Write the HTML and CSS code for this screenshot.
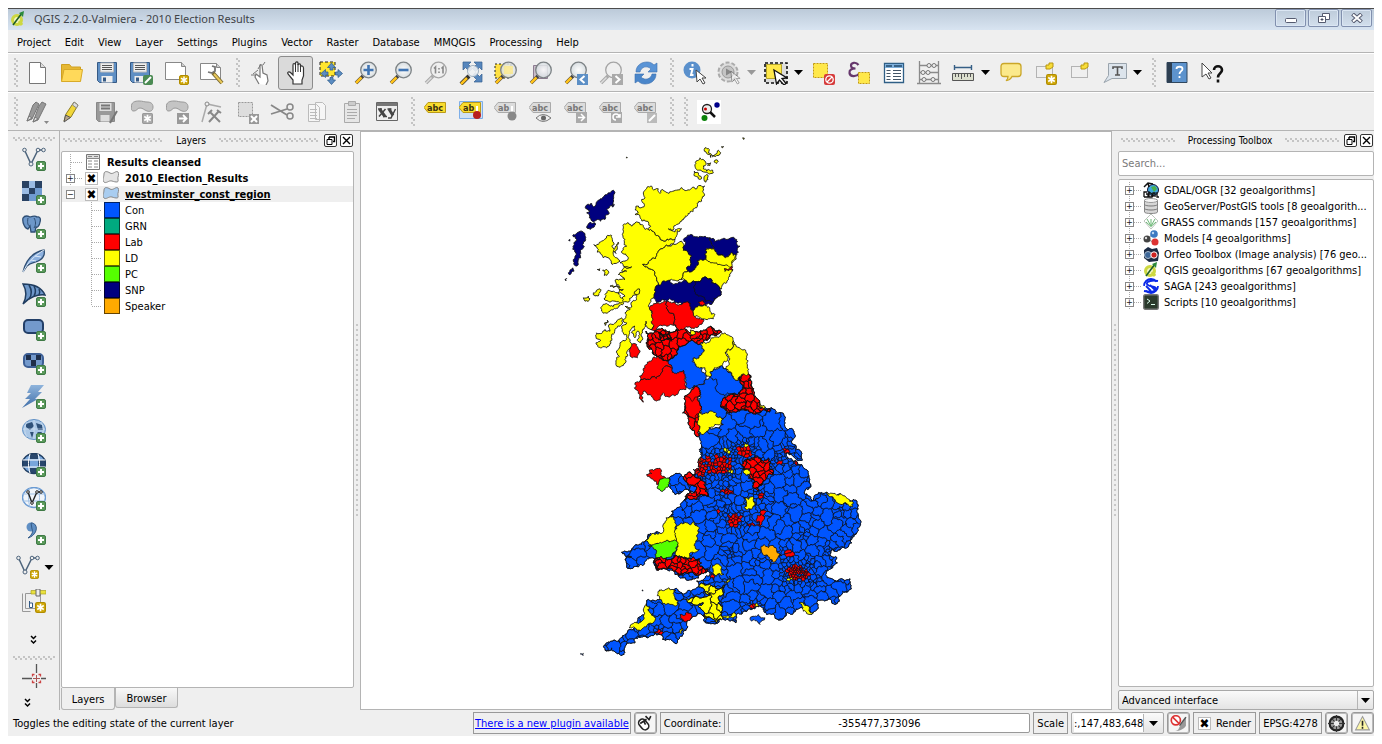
FILE: index.html
```html
<!DOCTYPE html>
<html lang="en">
<head>
<meta charset="utf-8">
<title>QGIS 2.2.0-Valmiera - 2010 Election Results</title>
<link rel="stylesheet" href="styles.css">
</head>
<body>
<svg class="sprite" aria-hidden="true">
<defs>
<linearGradient id="g-steel" x2="0" y2="1"><stop stop-color="#8fb4dc"/><stop offset="1" stop-color="#3f6ea8"/></linearGradient>
<radialGradient id="g-glass"><stop stop-color="#fff"/><stop offset="1" stop-color="#d4dbdf"/></radialGradient>
<symbol id="plus" viewBox="0 0 10 10"><rect x=".5" y=".5" width="9" height="9" rx="1.5" fill="#5b9a5b" stroke="#3f7a46"/><path d="M5 2v6M2 5h6" stroke="#fff" stroke-width="2"/></symbol>
<symbol id="star" viewBox="0 0 10 10"><rect x=".5" y=".5" width="9" height="9" rx="1.5" fill="#d0a808" stroke="#b08c00"/><path d="M5 1.5v7M2 3.2l6 3.6M8 3.2L2 6.8" stroke="#fff" stroke-width="1.5"/></symbol>
<symbol id="gstar" viewBox="0 0 10 10"><rect x=".5" y=".5" width="9" height="9" rx="1" fill="#aaa" stroke="#999"/><path d="M5 1.5v7M2 3.2l6 3.6M8 3.2L2 6.8" stroke="#fff" stroke-width="1.5"/></symbol>
<symbol id="lens" viewBox="0 0 24 24"><path d="M2 22l7-7" stroke="#444" stroke-width="3.5"/><path d="M2 22l5.5-5.5" stroke="#ffc21a" stroke-width="2.5"/><circle cx="14.5" cy="9" r="7.8" fill="url(#g-glass)" fill-opacity=".85" stroke="#7d8386" stroke-width="1.3"/></symbol>
<symbol id="glens" viewBox="0 0 24 24"><path d="M2 22l7-7" stroke="#aaa" stroke-width="3.5"/><path d="M2 22l5.5-5.5" stroke="#ddd" stroke-width="1.5"/><circle cx="14.5" cy="9" r="7.8" fill="#efefef" stroke="#a5a5a5" stroke-width="1.3"/></symbol>
<symbol id="new" viewBox="0 0 24 24"><path d="M4.5 1.5h11l5 5v16h-16z" fill="#fff" stroke="#777"/><path d="M15.5 1.5v5h5" fill="#ddd" stroke="#777"/></symbol>
<symbol id="open" viewBox="0 0 24 24"><path d="M1.5 20V3.5h8l2 2.5h9v14z" fill="#e6b834" stroke="#cfa020"/><path d="M1.5 20.5L4 8.5h18.5l-2 12z" fill="#ffd95a" stroke="#d8aa28"/></symbol>
<symbol id="save" viewBox="0 0 24 24"><path d="M2.5 1.5h19v20h-17l-2-2z" fill="#5f8fc4" stroke="#365a85"/><path d="M5.5 2h13v9h-13z" fill="#eee" stroke="#bbb"/><path d="M7 4.5h10M7 6.5h10M7 8.5h10" stroke="#555"/><path d="M6.5 15h11v6.5h-11z" fill="#eee"/><path d="M8 16.5h3v4H8z" fill="#365a85"/></symbol>
<symbol id="saveas" viewBox="0 0 24 24"><use href="#save" x="-2"/><rect x="13" y="14" width="10" height="10" rx="2" fill="#4a8a52"/><path d="M15 22l6-6" stroke="#fff" stroke-width="2"/></symbol>
<symbol id="compose" viewBox="0 0 24 24"><path d="M.5 1.5h16l4 4v13H.5z" fill="#fff" stroke="#888"/><path d="M16.5 1.5v4h4" fill="#ccc" stroke="#888"/><use href="#star" x="14" y="14" width="10" height="10"/></symbol>
<symbol id="manager" viewBox="0 0 24 24"><path d="M.5 2.5h16l4 4v12H.5z" fill="#fff" stroke="#888"/><path d="M16.5 2.5v4h4" fill="#ccc" stroke="#888"/><path d="M8 11l4 1 3-2 0-4-3-1" stroke="#777" stroke-width="1.8" fill="none"/><path d="M13 12l9 10" stroke="#7b6a32" stroke-width="4"/><path d="M14 13l8 9" stroke="#e9c95a" stroke-width="2"/></symbol>
<symbol id="touch" viewBox="0 0 24 24"><path d="M10 23l-4-7 1-3 4 3 0-12 2 0 1 8 4 2 1 6-2 4" fill="#fff" stroke="#777" stroke-width="1.2"/><path d="M4 13l5-4M2 14h4M9 8l3-5M14 4l2-3" stroke="#777" fill="none"/></symbol>
<symbol id="hand" viewBox="0 0 24 24"><path d="M9 23v-4l-5-6c-1-2 1-3 3-1l2 2V4c0-2 2-2 2.5 0V2c.5-2 2.500-1 2.500 0v2c.5-2 2.500-1 2.500 0v2c.5-2 3-1 3 1v8l-1.500 4v4z" fill="#fff" stroke="#333" stroke-width="1.2"/><path d="M11.500 4v7M14 3v8M16.500 4v7" stroke="#333"/></symbol>
<symbol id="pansel" viewBox="0 0 24 24"><path d="M1 1h15v14H1z" fill="#ffe62e" stroke="#222" stroke-dasharray="3 2"/><path d="M12.5 2l4 4.5H14V9h-3V6.500H8.500zM12.500 23.500l4-4.500H14v-2.500h-3V19H8.500zM2 12.500l4.500-4V11H9v3H6.500v2.500zM23.500 12.500l-4.500-4V11h-2.500v3H19v2.500z" fill="#5b8cc2" stroke="#33618f" stroke-width=".8"/></symbol>
<symbol id="zin" viewBox="0 0 24 24"><use href="#lens"/><path d="M14.5 4v10M9.500 9h10" stroke="#3f74b3" stroke-width="2.6"/></symbol>
<symbol id="zout" viewBox="0 0 24 24"><use href="#lens"/><path d="M9.500 9h10" stroke="#3f74b3" stroke-width="2.6"/></symbol>
<symbol id="znative" viewBox="0 0 24 24"><use href="#glens"/><path d="M10 7.500L11.500 6v6.500M17.500 7.500L19 6v6.500M15 7v1.500M15 10.500V12" stroke="#888" stroke-width="1.6" fill="none"/></symbol>
<symbol id="zfull" viewBox="0 0 24 24"><path d="M4 1h8L9.500 3.500l4 4-3 3-4-4L4 9zM23 1v8l-2.500-2.500-4 4-3-3 4-4L15 1zM23 21v-8l-2.500 2.500-4-4-3 3 4 4L15 21z" fill="#5686bd" stroke="#345f90" stroke-width=".7"/><path d="M2 23l8-8" stroke="#333" stroke-width="4"/><path d="M2 23l6-6" stroke="#ffc21a" stroke-width="2.5"/><circle cx="14" cy="10" r="5.500" fill="#eef1f3" fill-opacity=".9" stroke="#8ba0b3" stroke-width=".8"/></symbol>
<symbol id="zsel" viewBox="0 0 24 24"><path d="M1 3h16v14H1z" fill="#ffe043" stroke="#222" stroke-dasharray="2 2"/><use href="#lens"/><path d="M10 5h9v8h-9z" fill="#fbe88a" opacity=".8"/></symbol>
<symbol id="zlayer" viewBox="0 0 24 24"><path d="M4.500 4.500h14v13h-14z" fill="#c9bdca" stroke="#8c7b90"/><use href="#lens"/></symbol>
<symbol id="zlast" viewBox="0 0 24 24"><use href="#lens"/><path d="M13 13h11v11H13z" fill="#5c8fc6"/><path d="M20.500 15l-4 3.500 4 3.500" fill="none" stroke="#fff" stroke-width="2"/></symbol>
<symbol id="znext" viewBox="0 0 24 24"><use href="#glens"/><path d="M13 13h11v11H13z" fill="#aaa"/><path d="M16.500 15l4 3.500-4 3.500" fill="none" stroke="#fff" stroke-width="2"/></symbol>
<symbol id="refresh" viewBox="0 0 24 24"><path d="M2 11C2 4 8 1 13 1c3 0 5 1 7 3l3-2v9h-9l3-3c-4-4-10-2-11 3z" fill="#5a94d6" stroke="#3a6fae" stroke-width=".6"/><path d="M22 13c0 7-6 10-11 10-3 0-5-1-7-3l-3 2v-9h9l-3 3c4 4 10 2 11-3z" fill="#4a86ca" stroke="#3a6fae" stroke-width=".6"/></symbol>
<symbol id="cursor" viewBox="0 0 12 16"><path d="M1 1l10 8H7l3 5-2 1-3-5-3 3z" fill="#fff" stroke="#444"/></symbol>
<symbol id="info" viewBox="0 0 24 24"><circle cx="9" cy="9" r="8.500" fill="#5a90cc"/><path d="M9.500 3v2.500M6.500 8h3l-1.500 6h2.500" stroke="#fff" stroke-width="2" fill="none"/><use href="#cursor" x="12" y="8" width="12" height="16"/></symbol>
<symbol id="action" viewBox="0 0 24 24"><circle cx="11" cy="11" r="9.500" fill="#ddd" stroke="#aaa" stroke-width="2" stroke-dasharray="4 2"/><circle cx="11" cy="11" r="6" fill="#c4c4c4" stroke="#999"/><path d="M9 7.500l6 3.500-6 3.500z" fill="#888"/><g opacity=".5"><use href="#cursor" x="13" y="9" width="11" height="15"/></g></symbol>
<symbol id="select" viewBox="0 0 24 24"><path d="M1 2h22v20H1z" fill="#ddd" stroke="#111" stroke-width="1.6" stroke-dasharray="3 2"/><path d="M2.500 3.500h15v14h-15z" fill="#ffe84a" stroke="#b5a42a"/><path d="M10 9l13 8-5 .5 4 5-2 1.500-4.500-5-3 4z" fill="#fff" stroke="#111" stroke-width="1.3"/></symbol>
<symbol id="desel" viewBox="0 0 24 24"><path d="M1.500 2.500h14v14h-14z" fill="#ffe84a" stroke="#c29a10" stroke-dasharray="2 1"/><rect x="12" y="13" width="11" height="11" rx="2" fill="#d63a3a"/><circle cx="17.500" cy="18.500" r="3.700" fill="none" stroke="#fff" stroke-width="1.3"/><path d="M15 21l5-5" stroke="#fff" stroke-width="1.3"/></symbol>
<symbol id="expr" viewBox="0 0 24 24"><path d="M11.500 4C9 .5 4 1.500 4 4.500 4 7 7 7.500 8.500 7.500 5 7.500 2 8.500 2.500 12c.5 4 7 4 10 .5" fill="none" stroke="#66376c" stroke-width="2.2"/><path d="M11.500 11.500h11v11h-11z" fill="#ffe84a" stroke="#c29a10" stroke-dasharray="2 1"/></symbol>
<symbol id="table" viewBox="0 0 24 24"><path d="M2.500 2.500h19v19h-19z" fill="#fff" stroke="#2f5f86" stroke-width="1.3"/><path d="M3 3h18v4H3z" fill="#7fb0dc"/><path d="M4 5h6M12 5h8" stroke="#234a6b" stroke-width="1.5"/><path d="M4.500 9.500h4M4.500 12.500h4M4.500 15.500h4M4.500 18.500h4M11 9.500h8M11 12.500h8M11 15.500h8M11 18.500h8" stroke="#456"/></symbol>
<symbol id="abacus" viewBox="0 0 24 24"><path d="M2.500 0v22M21.500 0v22M0 22.500h24M2 4.500h20M2 11.500h20M2 18.500h20" stroke="#8a8a8a" stroke-width="1.3"/><g fill="#eee" stroke="#777"><circle cx="12" cy="4.500" r="2"/><circle cx="17" cy="4.500" r="2"/><circle cx="6" cy="11.500" r="2"/><circle cx="11" cy="11.500" r="2"/><circle cx="7" cy="18.500" r="2"/><circle cx="16" cy="18.500" r="2"/></g></symbol>
<symbol id="measure" viewBox="0 0 24 24"><path d="M3 6.500h18M3.500 4v5M20.500 4v5" stroke="#365f86" stroke-width="1.4"/><path d="M1.500 12.500h21v7h-21z" fill="#dcdfce" stroke="#555"/><path d="M4.500 13v3M7.500 13v3M10.500 13v5M13.500 13v3M16.500 13v3M19.500 13v3" stroke="#555"/></symbol>
<symbol id="tip" viewBox="0 0 24 24"><path d="M5 2.500h14q3 0 3 3v7q0 3-3 3h-6q-2 4-6 4 2-1 2-4H5q-3 0-3-3v-7q0-3 3-3z" fill="#fbe98b" stroke="#caa628" stroke-width="1.3"/></symbol>
<symbol id="bmshow" viewBox="0 0 24 24"><path d="M2.500 5.500h16v11h-16z" fill="none" stroke="#777" stroke-dasharray="1 1"/><path d="M12 4h3V2h4v4l-3 2h-4z" fill="#f7dc38" stroke="#b89610"/></symbol>
<symbol id="bmnew" viewBox="0 0 24 24"><use href="#bmshow"/><use href="#star" x="12" y="13" width="11" height="11"/></symbol>
<symbol id="annot" viewBox="0 0 24 24"><path d="M5.500 2.500h18v15H9l-8 4 4.500-7z" fill="#dce4ec" stroke="#9aa4ad"/><path d="M10 8V6h9v2M14.500 6v8M12 14h5" fill="none" stroke="#555" stroke-width="1.6"/></symbol>
<symbol id="help" viewBox="0 0 24 24"><path d="M2 1.500h20v20H2z" fill="#5d93cd" stroke="#30475e"/><path d="M2 1.500h5v20H2z" fill="#2d3f52"/><path d="M11.500 8c0-3 6-3 6 0 0 2-3 2.500-3 5M14.500 15v2" stroke="#fff" stroke-width="1.8" fill="none"/></symbol>
<symbol id="what" viewBox="0 0 24 24"><path d="M2 2l10 10H8l3 5-2 1-3-5-4 3z" fill="#fff" stroke="#444"/><path d="M14 9c0-5 8-5 8 0 0 3.500-4 3-4 7.500M18 18.500v3" stroke="#111" stroke-width="2.6" fill="none"/></symbol>
<symbol id="edits" viewBox="0 0 24 24"><path d="M2 21L8 5l3-3 3 2-7 15zM8 22l6-16 3-4 4 2-8 16z" fill="#999" stroke="#777"/><path d="M2 21l2-5 3 2zM8 22l2-5 3 2z" fill="#ddd" stroke="#777"/><path d="M19 21h5l-2.500 3z" fill="#888"/></symbol>
<symbol id="pencil" viewBox="0 0 24 24"><path d="M4 21l2-7L14 2l4 3-7 12z" fill="#f1d638" stroke="#8d7c22"/><path d="M14 2l4 3-1.500 3-4-3z" fill="#ddd" stroke="#888"/><path d="M4 22l1.500-7 5 2.500z" fill="#b9a68a" stroke="#555"/></symbol>
<symbol id="gsave" viewBox="0 0 24 24"><path d="M1.500 2.500h18v19h-16l-2-2z" fill="#999" stroke="#888"/><path d="M4.500 3h12v8h-12zM5.500 15h9v6.500h-9z" fill="#ddd"/><path d="M6 5.500h9M6 8.500h9M15 23l7-12" stroke="#777" stroke-width="2"/></symbol>
<symbol id="blob" viewBox="0 0 24 14"><path d="M1.500 7C1 2 5 1 9 1s5 1 8 1 6 1 6 5-3 5-6 4-4-3-7-3-3 3-6 3-2.500-2-2.500-4z" fill="#c4c4c4" stroke="#999"/></symbol>
<symbol id="feat" viewBox="0 0 24 24"><use href="#blob" width="24" height="14"/><use href="#gstar" x="12" y="13" width="11" height="11"/></symbol>
<symbol id="move" viewBox="0 0 24 24"><use href="#blob" width="24" height="14"/><path d="M12 13h12v11H12z" fill="#999"/><path d="M14 18.500h7M18 15l3.500 3.500L18 22" fill="none" stroke="#fff" stroke-width="1.8"/></symbol>
<symbol id="node" viewBox="0 0 24 24"><path d="M2 22L7 4l14 3" fill="none" stroke="#aaa" stroke-width="1.5"/><circle cx="7" cy="4" r="2" fill="#eee" stroke="#888"/><path d="M9 22l10-11M10 12l10 10M8 14l4-4M17 10l4 3" stroke="#888" stroke-width="2"/></symbol>
<symbol id="delsel" viewBox="0 0 24 24"><path d="M3.500 2.500h14v14h-14z" fill="#ddd" stroke="#999" stroke-dasharray="2 1"/><path d="M14 14h10v10H14z" fill="#999"/><path d="M16 16l6 6M22 16l-6 6" stroke="#fff" stroke-width="2"/></symbol>
<symbol id="cut" viewBox="0 0 24 24"><path d="M1 5l16 10M1 14l16-5" stroke="#888" stroke-width="1.8"/><circle cx="20" cy="7" r="3" fill="none" stroke="#888" stroke-width="1.5"/><circle cx="20" cy="16" r="3" fill="none" stroke="#888" stroke-width="1.5"/></symbol>
<symbol id="copy" viewBox="0 0 24 24"><path d="M10.500 2.500h7l3 3v14h-10zM3.500 4.500h8l3 3v14h-11z" fill="#f6f6f6" stroke="#bbb"/><path d="M5 9.500h7M5 12.500h7M5 15.500h7M5 18.500h7" stroke="#bbb"/></symbol>
<symbol id="paste" viewBox="0 0 24 24"><path d="M4.500 3.500h15v19h-15z" fill="#e6e6e6" stroke="#aaa"/><path d="M8.500 1.500h7v4h-7z" fill="#ccc" stroke="#aaa"/><path d="M7 9.500h10M7 12.500h10M7 15.500h10M7 18.500h8" stroke="#aaa"/></symbol>
<symbol id="xy" viewBox="0 0 24 24"><path d="M1.500 2.500h21v18h-21z" fill="#eee" stroke="#666"/><path d="M2 3h20v3H2z" fill="#777"/><path d="M4.500 9l5.500 7.500M14 9l4 6.500" stroke="#444" stroke-width="3" fill="none"/><path d="M10.500 9L4 16.500M3 9h4M8 16.500h4M12.500 9h4M20.500 9l-4.500 9h-3" stroke="#444" stroke-width="1.500" fill="none"/></symbol>
<symbol id="raster" viewBox="0 0 24 24"><path d="M0 0h20v20H0z" fill="#6f9bd1"/><path d="M0 0h7v7H0zM13 0h7v7h-7zM7 7h6v6H7zM0 13h7v7H0z" fill="#294263"/><path d="M7 0h6v7H7zM0 7h7v6H0z" fill="#9bbce4"/><use href="#plus" x="14" y="14" width="10" height="10"/></symbol>
<symbol id="vector" viewBox="0 0 24 24"><path d="M2.500 3L9 17 16 3h5" fill="none" stroke="#4d647c" stroke-width="1.500"/><g fill="#eee" stroke="#4d647c"><circle cx="2.500" cy="3" r="1.800"/><circle cx="9" cy="17" r="2"/><circle cx="16" cy="3" r="1.800"/><circle cx="21.500" cy="3" r="1.800"/></g></symbol>
<symbol id="vadd" viewBox="0 0 24 24"><use href="#vector"/><use href="#plus" x="14" y="14" width="10" height="10"/></symbol>
<symbol id="pg" viewBox="0 0 24 24"><path d="M1 3c2-3 5-2 7-1 3-1 6-1 7 0 3-1 4 2 3 5-.5 4-3 6-4 5l-1 5H9l-1-6-2 3C3 14 0 7 1 3z" fill="#6d97c9" stroke="#2e4e74" stroke-width="1.300"/><path d="M6 3c-1 5 0 8 2 8M12 3c2 3 2 7 0 10" stroke="#2e4e74" fill="none"/><use href="#plus" x="14" y="14" width="10" height="10"/></symbol>
<symbol id="feather" viewBox="0 0 24 24"><path d="M1 23C3 14 8 4 22 1c1 4-1 8-4 10-4 3-9 2-13 6z" fill="#8db1df" stroke="#2e4e74" stroke-width="1.300"/><path d="M1 23C6 13 12 7 22 1M9 11l5 1M13 7l6 1" stroke="#dce9f8" fill="none"/><use href="#plus" x="14" y="14" width="10" height="10"/></symbol>
<symbol id="mssql" viewBox="0 0 24 24"><path d="M1 1c9 0 18 2 22 11-7-1-16 2-22 9 4-7 4-13 0-20z" fill="#6d97c9" stroke="#203d60" stroke-width="1.500"/><path d="M7 2c3 5 3 10 0 14M12 3c2 4 2 7 0 10M17 6c1 2 1 4 0 6" stroke="#203d60" stroke-width="1.500" fill="none"/><use href="#plus" x="14" y="14" width="10" height="10"/></symbol>
<symbol id="oracle" viewBox="0 0 24 24"><rect x="2" y="3" width="19" height="13" rx="4" fill="#7399cc" stroke="#233f68" stroke-width="2"/><use href="#plus" x="14" y="14" width="10" height="10"/></symbol>
<symbol id="oraster" viewBox="0 0 24 24"><rect x="2" y="3" width="19" height="13" rx="4" fill="#7399cc" stroke="#3d5f95" stroke-width="2"/><path d="M4 4h5v5H4zM14 4h5v5h-5zM9 9h5v6H9z" fill="#1e2e49"/><use href="#plus" x="14" y="14" width="10" height="10"/></symbol>
<symbol id="bolt" viewBox="0 0 24 24"><path d="M9 0h13l-6 7h4l-7 7h3L0 23l8-9H3l6-6H5z" fill="url(#g-steel)"/><use href="#plus" x="14" y="14" width="10" height="10"/></symbol>
<symbol id="wms" viewBox="0 0 24 24"><ellipse cx="12" cy="10.500" rx="11.500" ry="10" fill="#aac7e6" stroke="#5f8fc4"/><path d="M4 5l6-2 2 4-4 4-4-3zM14 4l6 2 1 5h-5zM8 13h4l-2 6zM15 13h5l-2 3z" fill="#2f5179"/><path d="M1 10h22M12 1v19M5 3c-3 5-3 10 0 15M19 3c3 5 3 10 0 15" stroke="#d8e6f4" fill="none" stroke-width=".6"/><use href="#plus" x="14" y="14" width="10" height="10"/></symbol>
<symbol id="wcs" viewBox="0 0 24 24"><ellipse cx="12" cy="10.500" rx="11.500" ry="10" fill="#78a6db" stroke="#203d60" stroke-width="1.400"/><path d="M1 7h7v7H1zM16 7h7v7h-7zM8 1h8v5H8zM8 15h8v5H8z" fill="#203d60" opacity=".9"/><path d="M1 7h22M1 14h22M8 1c-2 6-2 13 0 19M16 1c2 6 2 13 0 19" stroke="#fff" fill="none"/><use href="#plus" x="14" y="14" width="10" height="10"/></symbol>
<symbol id="wfs" viewBox="0 0 24 24"><ellipse cx="12" cy="10.500" rx="11.500" ry="10" fill="#f1f5fa" stroke="#6a9ad2" stroke-width="1.400"/><path d="M1 7h22M1 14h22M8 1c-2 6-2 13 0 19M16 1c2 6 2 13 0 19" stroke="#9fc0e4" fill="none"/><path d="M6 5l4 11 5-11h4" stroke="#222" stroke-width="1.400" fill="none"/><g fill="#fff" stroke="#222"><circle cx="6" cy="5" r="1.300"/><circle cx="10" cy="16" r="1.300"/><circle cx="15" cy="5" r="1.300"/><circle cx="19" cy="5" r="1.300"/></g><use href="#plus" x="14" y="14" width="10" height="10"/></symbol>
<symbol id="comma" viewBox="0 0 24 24"><circle cx="9" cy="6" r="4.500" fill="#5f8fc4"/><path d="M9 2c8 0 7 12-3 15 5-4 5-7 4-9z" fill="#5f8fc4" stroke="#345a86"/><use href="#plus" x="14" y="14" width="10" height="10"/></symbol>
<symbol id="vnew" viewBox="0 0 24 24"><use href="#vector"/><use href="#star" x="14" y="15" width="9" height="9"/></symbol>
<symbol id="gps" viewBox="0 0 24 24"><path d="M.5 22.500v-18M.5 22.500h8M3.500 4.500h15v15h-15z" fill="#eee" stroke="#999"/><path d="M7.500 12v6.500h3V14h-3" fill="#fff" stroke="#345a86"/><path d="M9 1.500h15V5H9z" fill="#e9e13e" stroke="#aaa020" stroke-width=".7"/><path d="M14 0h4v7h-4z" fill="#eee" stroke="#666"/><use href="#star" x="13" y="13" width="11" height="11"/></symbol>
<symbol id="cross" viewBox="0 0 24 24"><path d="M14.500 0v9M14.500 19v5M0 14.500h10M19 14.500h5" stroke="#555" stroke-width="1.300"/><path d="M10.500 12.500v-2h2M16.500 10.500h2v2M18.500 16.500v2h-2M12.500 18.500h-2v-2" stroke="#c44" fill="none" stroke-width="1.300"/><path d="M14.500 11v7M11 14.500h7" stroke="#a55"/></symbol>
<symbol id="graph" viewBox="0 0 24 24"><path d="M0 0h24v24H0z" fill="#fff"/><circle cx="10" cy="9" r="4.500" fill="#eee" stroke="#222" stroke-width="1.300"/><path d="M13 12l5 5" stroke="#111" stroke-width="2.500"/><circle cx="8.500" cy="9" r="1.500" fill="#c00"/><circle cx="20" cy="5" r="2.700" fill="#00008b"/><circle cx="7.500" cy="18" r="3" fill="#0a820a"/></symbol>
<symbol id="down" viewBox="0 0 9 5"><path d="M0 0h9L4.500 5z" fill="currentColor"/></symbol>
<symbol id="chev" viewBox="0 0 8 10"><path d="M1 1l2.500 2.500L6 1M1 5.500L3.500 8 6 5.500" stroke="#000" stroke-width="1.500" fill="none"/></symbol>
<symbol id="tag" viewBox="0 0 24 24"><path d="M0 7.500l4-5h17.500v10H4z" fill="currentColor"/></symbol>
<symbol id="float" viewBox="0 0 13 13"><rect x=".5" y=".5" width="12" height="12" rx="1.500" fill="#fff" stroke="#333"/><path d="M5 3h5.500v4.500H9M5 3v2" fill="none" stroke="#000" stroke-width="1.400"/><path d="M3 5.500h5v5H3z" fill="none" stroke="#000"/></symbol>
<symbol id="close" viewBox="0 0 13 13"><rect x=".5" y=".5" width="12" height="12" rx="1.500" fill="#fff" stroke="#333"/><path d="M3 3l7 7M10 3l-7 7" stroke="#000" stroke-width="1.400"/></symbol>
<symbol id="poly" viewBox="0 0 16 16"><path d="M1 4c0-3 3-3 6-1s6-3 8-1-1 5 0 8-3 2-6 1-6 3-8 1 0-5 0-8z" fill="currentColor" stroke="#888"/></symbol>
<symbol id="ltable" viewBox="0 0 16 16"><path d="M1.500.5h13v15h-13z" fill="#fff" stroke="#777"/><path d="M2 1h12v3H2z" fill="#ddd"/><path d="M1 4.500h14M3 7h4M3 10h4M3 13h4M9 7h4M9 10h4M9 13h4M3 2.500h4M9 2.500h4" stroke="#888"/></symbol>
<symbol id="qgis" viewBox="0 0 16 16"><circle cx="7" cy="9" r="4.500" fill="#f3f6c0" stroke="#cdd842" stroke-width="3"/><path d="M9 10l3 4" stroke="#cdd842" stroke-width="3"/><path d="M3 14L12 2" stroke="#1d5c28" stroke-width="1.500"/><path d="M9 2l5-2-1 6z" fill="#2b8a3a"/></symbol>
<symbol id="gdal" viewBox="0 0 16 16"><circle cx="10" cy="8" r="5.500" fill="#3fa7dc" stroke="#113"/><path d="M8 5l4-1 2 3-3 3z" fill="#4cb04c"/><path d="M1 5l4-4 5 1M5 1l1 4" stroke="#111" stroke-width="1.500" fill="none"/><path d="M1 15v-5h3M3 12h2v3H1M6 15v-5l3 2v3zM10 15v-4h2v4M14 10v5h2" stroke="#111" fill="none" stroke-width="1.300"/></symbol>
<symbol id="db" viewBox="0 0 16 16"><path d="M1.500 2v12c0 2 13 2 13 0V2z" fill="#d6d6d6" stroke="#888"/><ellipse cx="8" cy="2.500" rx="6.500" ry="2" fill="#f5f5f5" stroke="#999"/><path d="M1.500 6.500c1 2 12 2 13 0M1.500 10.500c1 2 12 2 13 0" fill="none" stroke="#777"/></symbol>
<symbol id="grass" viewBox="0 0 16 16"><path d="M8 0l7 7-7 8-7-8z" fill="#fff" stroke="#bcc4bc"/><path d="M8 13V5M8 12L4 5M8 12l4-7M7.500 12L3 8M8.500 12L13 8" stroke="#6db877" fill="none"/></symbol>
<symbol id="model" viewBox="0 0 16 16"><path d="M4 9l6-5M4 9l8 4" stroke="#888"/><circle cx="4" cy="9" r="3.500" fill="#444"/><circle cx="3" cy="8" r="1.200" fill="#ddd"/><circle cx="11" cy="4" r="3.800" fill="#3c7ac2"/><circle cx="12" cy="12" r="3.500" fill="#d33"/><circle cx="10" cy="3" r="1.200" fill="#bdd8f2"/></symbol>
<symbol id="otb" viewBox="0 0 16 16"><path d="M1 4l4-3 4 2 5-1 2 5-1 8-9 1-5-4z" fill="#1b2a44"/><circle cx="5" cy="9" r="3.500" fill="#3d6799" stroke="#abc"/><circle cx="11" cy="9" r="3.200" fill="#c22" stroke="#fff"/></symbol>
<symbol id="saga" viewBox="0 0 16 16"><circle cx="8" cy="8" r="7" fill="#fff" stroke="#0a28e8" stroke-width="1.800" stroke-dasharray="17 5"/><path d="M15 3C10 2 3 3 4 6s10 2 9 5-7 3-12 2M7 7l6 6M3 8l5 5" stroke="#0a28e8" stroke-width="1.800" fill="none"/></symbol>
<symbol id="script" viewBox="0 0 16 16"><rect x=".7" y=".7" width="14.600" height="14.600" rx="1.500" fill="#2b3a2c" stroke="#777" stroke-width="1.400"/><path d="M4 5l3 2-3 2.500M8 10.500h4" stroke="#dfe" fill="none"/></symbol>
</defs>
</svg>

<div class="app">
<header class="titlebar">
  <svg class="i16"><use href="#qgis"/></svg>
  <h1>QGIS 2.2.0-Valmiera - 2010 Election Results</h1>
  <div class="winbtns">
    <button aria-label="Minimize"><svg viewBox="0 0 12 10"><rect x=".5" y="5.500" width="11" height="4" rx="1" fill="#fff" stroke="#555b70"/></svg></button>
    <button aria-label="Restore"><svg viewBox="0 0 12 10"><path d="M4.500.5h7v6h-7z" fill="#fff" stroke="#555b70"/><path d="M.5 3.500h7v6h-7z" fill="#fff" stroke="#555b70"/><path d="M3 6h2v1H3z" stroke="#555b70"/></svg></button>
    <button aria-label="Close"><svg viewBox="0 0 12 10"><path d="M1.500 1l9 8M10.500 1l-9 8" stroke="#555b70" stroke-width="4"/><path d="M2 1.500l8 7M10 1.500l-8 7" stroke="#fff" stroke-width="2"/></svg></button>
  </div>
</header>
<nav class="menubar"><button>Project</button><button>Edit</button><button>View</button><button>Layer</button><button>Settings</button><button>Plugins</button><button>Vector</button><button>Raster</button><button>Database</button><button>MMQGIS</button><button>Processing</button><button>Help</button></nav>

<div class="toolbar" role="toolbar" aria-label="File and map tools">
  <i class="grip first"></i>
  <button aria-label="New"><svg><use href="#new"/></svg></button>
  <button aria-label="Open"><svg><use href="#open"/></svg></button>
  <button aria-label="Save"><svg><use href="#save"/></svg></button>
  <button aria-label="Save as"><svg><use href="#saveas"/></svg></button>
  <button aria-label="New composer"><svg><use href="#compose"/></svg></button>
  <button aria-label="Composer manager"><svg><use href="#manager"/></svg></button>
  <i class="grip"></i>
  <button aria-label="Touch zoom"><svg><use href="#touch"/></svg></button>
  <button class="on" aria-label="Pan"><svg><use href="#hand"/></svg></button>
  <button aria-label="Pan to selection"><svg><use href="#pansel"/></svg></button>
  <button aria-label="Zoom in"><svg><use href="#zin"/></svg></button>
  <button aria-label="Zoom out"><svg><use href="#zout"/></svg></button>
  <button aria-label="Native zoom"><svg><use href="#znative"/></svg></button>
  <button aria-label="Zoom full"><svg><use href="#zfull"/></svg></button>
  <button aria-label="Zoom to selection"><svg><use href="#zsel"/></svg></button>
  <button aria-label="Zoom to layer"><svg><use href="#zlayer"/></svg></button>
  <button aria-label="Zoom last"><svg><use href="#zlast"/></svg></button>
  <button aria-label="Zoom next"><svg><use href="#znext"/></svg></button>
  <button aria-label="Refresh"><svg><use href="#refresh"/></svg></button>
  <i class="grip"></i>
  <button aria-label="Identify"><svg><use href="#info"/></svg></button>
  <button class="drop off" aria-label="Run action"><svg><use href="#action"/></svg><svg class="arr"><use href="#down"/></svg></button>
  <button class="drop" aria-label="Select"><svg><use href="#select"/></svg><svg class="arr"><use href="#down"/></svg></button>
  <button aria-label="Deselect"><svg><use href="#desel"/></svg></button>
  <button aria-label="Select by expression"><svg><use href="#expr"/></svg></button>
  <button aria-label="Attribute table"><svg><use href="#table"/></svg></button>
  <button aria-label="Field calculator"><svg><use href="#abacus"/></svg></button>
  <button class="drop" aria-label="Measure"><svg><use href="#measure"/></svg><svg class="arr"><use href="#down"/></svg></button>
  <button aria-label="Map tips"><svg><use href="#tip"/></svg></button>
  <button aria-label="New bookmark"><svg><use href="#bmnew"/></svg></button>
  <button aria-label="Show bookmarks"><svg><use href="#bmshow"/></svg></button>
  <button class="drop" aria-label="Annotation"><svg><use href="#annot"/></svg><svg class="arr"><use href="#down"/></svg></button>
  <i class="grip"></i>
  <button aria-label="Help contents"><svg><use href="#help"/></svg></button>
  <button aria-label="What's this"><svg><use href="#what"/></svg></button>
</div>

<div class="toolbar" role="toolbar" aria-label="Editing and labels">
  <i class="grip first"></i>
  <button aria-label="Current edits"><svg><use href="#edits"/></svg></button>
  <button aria-label="Toggle editing"><svg><use href="#pencil"/></svg></button>
  <button aria-label="Save edits"><svg><use href="#gsave"/></svg></button>
  <button aria-label="Add feature"><svg><use href="#feat"/></svg></button>
  <button aria-label="Move feature"><svg><use href="#move"/></svg></button>
  <button aria-label="Node tool"><svg><use href="#node"/></svg></button>
  <button aria-label="Delete selected"><svg><use href="#delsel"/></svg></button>
  <button aria-label="Cut"><svg><use href="#cut"/></svg></button>
  <button aria-label="Copy"><svg><use href="#copy"/></svg></button>
  <button aria-label="Paste"><svg><use href="#paste"/></svg></button>
  <button aria-label="Coordinate capture"><svg><use href="#xy"/></svg></button>
  <i class="grip"></i>
  <button class="lab gold" aria-label="Labeling"><svg viewBox="0 0 24 24"><use href="#tag"/><text x="3" y="11">abc</text></svg></button>
  <button class="lab gold" aria-label="Highlight pinned labels"><svg viewBox="0 0 24 24"><path d="M.5 1.500h23v17H.5z" fill="#cfe0f5" stroke="#7daee8"/><use href="#tag"/><text x="4" y="11">ab</text><path d="M18 6v8" stroke="#fff" stroke-width="2"/><circle cx="18" cy="15" r="4" fill="#b81f1f"/></svg></button>
  <button class="lab" aria-label="Pin labels"><svg viewBox="0 0 24 24"><use href="#tag"/><text x="4" y="11">ab</text><path d="M18 6v8" stroke="#fff" stroke-width="2"/><circle cx="18" cy="16" r="4.500" fill="#888"/></svg></button>
  <button class="lab" aria-label="Show or hide labels"><svg viewBox="0 0 24 24"><use href="#tag"/><text x="3" y="11">abc</text><path d="M7 18q7-7 15 0-8 7-15 0z" fill="#eee" stroke="#777"/><circle cx="14.500" cy="18" r="2.500" fill="#666"/></svg></button>
  <button class="lab" aria-label="Move label"><svg viewBox="0 0 24 24"><use href="#tag"/><text x="3" y="11">abc</text><path d="M12 12h11v11H12z" fill="#aaa"/><path d="M14 17.500h6M17 14l3.500 3.500L17 21" stroke="#fff" stroke-width="1.500" fill="none"/></svg></button>
  <button class="lab" aria-label="Rotate label"><svg viewBox="0 0 24 24"><use href="#tag"/><text x="3" y="11">abc</text><path d="M12 12h11v11H12z" fill="#aaa"/><path d="M20 17a3 3 0 1 0-3 3M17 17h4v-3" stroke="#fff" stroke-width="1.500" fill="none"/></svg></button>
  <button class="lab" aria-label="Change label"><svg viewBox="0 0 24 24"><use href="#tag"/><text x="3" y="11">abc</text><path d="M13 13h10v10H13z" fill="#bbb"/><path d="M15 21l6-6" stroke="#fff" stroke-width="2"/></svg></button>
  <i class="grip"></i><i class="grip"></i>
  <button aria-label="Road graph"><svg><use href="#graph"/></svg></button>
</div>

<main class="work">
  <div class="side" role="toolbar" aria-label="Manage layers">
    <i class="hgrip"></i>
    <button aria-label="Add vector layer"><svg><use href="#vadd"/></svg></button>
    <button aria-label="Add raster layer"><svg><use href="#raster"/></svg></button>
    <button aria-label="Add PostGIS layer"><svg><use href="#pg"/></svg></button>
    <button aria-label="Add SpatiaLite layer"><svg><use href="#feather"/></svg></button>
    <button aria-label="Add MSSQL layer"><svg><use href="#mssql"/></svg></button>
    <button aria-label="Add Oracle layer"><svg><use href="#oracle"/></svg></button>
    <button aria-label="Add Oracle raster"><svg><use href="#oraster"/></svg></button>
    <button aria-label="Add SQL Anywhere layer"><svg><use href="#bolt"/></svg></button>
    <button aria-label="Add WMS layer"><svg><use href="#wms"/></svg></button>
    <button aria-label="Add WCS layer"><svg><use href="#wcs"/></svg></button>
    <button aria-label="Add WFS layer"><svg><use href="#wfs"/></svg></button>
    <button aria-label="Add delimited text layer"><svg><use href="#comma"/></svg></button>
    <button class="new" aria-label="New layer"><svg><use href="#vnew"/></svg><svg class="arr"><use href="#down"/></svg></button>
    <button aria-label="GPS"><svg><use href="#gps"/></svg></button>
    <button class="more" aria-label="More"><svg><use href="#chev"/></svg></button>
    <i class="hgrip low"></i>
    <button class="xhair" aria-label="Coordinate capture"><svg><use href="#cross"/></svg></button>
    <button class="more end" aria-label="More"><svg><use href="#chev"/></svg></button>
  </div>

  <section class="panel layers">
    <div class="ptitle"><i></i><h2>Layers</h2><i></i><button aria-label="Float"><svg><use href="#float"/></svg></button><button aria-label="Close"><svg><use href="#close"/></svg></button></div>
    <ul class="tree">
      <li class="branch"><span class="exp none"></span><svg class="i16"><use href="#ltable"/></svg><b class="near">Results cleansed</b></li>
      <li class="branch"><button class="exp" aria-label="Expand">+</button><label><input type="checkbox" checked><svg class="i16 grey"><use href="#poly"/></svg><b>2010_Election_Results</b></label></li>
      <li class="sel"><button class="exp" aria-label="Collapse">−</button><label><input type="checkbox" checked><svg class="i16 blue"><use href="#poly"/></svg><b class="u">westminster_const_region</b></label></li>
      <li class="leg"><i class="c1"></i>Con</li>
      <li class="leg"><i class="c2"></i>GRN</li>
      <li class="leg"><i class="c3"></i>Lab</li>
      <li class="leg"><i class="c4"></i>LD</li>
      <li class="leg"><i class="c5"></i>PC</li>
      <li class="leg"><i class="c6"></i>SNP</li>
      <li class="leg"><i class="c7"></i>Speaker</li>
    </ul>
    <div class="tabs"><button class="cur">Layers</button><button>Browser</button></div>
  </section>
  <i class="split"></i>
  <div class="canvas"><svg id="map" viewBox="361 133 750 576" role="img" aria-label="Election results by constituency"></svg></div>
  <i class="split"></i>
  <section class="panel proc">
    <div class="ptitle"><i></i><h2>Processing Toolbox</h2><i></i><button aria-label="Float"><svg><use href="#float"/></svg></button><button aria-label="Close"><svg><use href="#close"/></svg></button></div>
    <input class="search" type="text" placeholder="Search..." aria-label="Search">
    <ul class="tree">
      <li class="branch"><button class="exp" aria-label="Expand">+</button><svg class="i16"><use href="#gdal"/></svg><span>GDAL/OGR [32 geoalgorithms]</span></li>
      <li class="branch"><button class="exp" aria-label="Expand">+</button><svg class="i16"><use href="#db"/></svg><span>GeoServer/PostGIS tools [8 geoalgorith...</span></li>
      <li class="branch"><button class="exp" aria-label="Expand">+</button><svg class="i16 narrow"><use href="#grass"/></svg><span>GRASS commands [157 geoalgorithms]</span></li>
      <li class="branch"><button class="exp" aria-label="Expand">+</button><svg class="i16"><use href="#model"/></svg><span>Models [4 geoalgorithms]</span></li>
      <li class="branch"><button class="exp" aria-label="Expand">+</button><svg class="i16"><use href="#otb"/></svg><span>Orfeo Toolbox (Image analysis) [76 geo...</span></li>
      <li class="branch"><button class="exp" aria-label="Expand">+</button><svg class="i16"><use href="#qgis"/></svg><span>QGIS geoalgorithms [67 geoalgorithms]</span></li>
      <li class="branch"><button class="exp" aria-label="Expand">+</button><svg class="i16"><use href="#saga"/></svg><span>SAGA [243 geoalgorithms]</span></li>
      <li class="branch"><button class="exp" aria-label="Expand">+</button><svg class="i16"><use href="#script"/></svg><span>Scripts [10 geoalgorithms]</span></li>
    </ul>
    <div class="combo"><select aria-label="Interface mode"><option>Advanced interface</option></select><svg class="arr"><use href="#down"/></svg></div>
  </section>
</main>

<footer class="status">
  <span class="msg">Toggles the editing state of the current layer</span>
  <span class="cell link"><a href="#plugins">There is a new plugin available</a></span>
  <button class="cell sq" aria-label="Toggle extents"><svg viewBox="0 0 16 16"><rect x="3" y="3" width="7" height="11" rx="3.500" fill="#fff" stroke="#222" stroke-width="1.500" transform="rotate(-40 7 9)"/><path d="M3 8l6-4M6 5l2 4M8 1l3 3M13 1l-2 4" stroke="#222" stroke-width="1.500" fill="none"/></svg></button>
  <label class="cell" for="coord">Coordinate:</label>
  <input id="coord" class="coord" type="text" value="-355477,373096">
  <label class="cell scale" for="scale">Scale</label>
  <div class="combo sc"><input id="scale" type="text" value=":,147,483,648"><svg class="arr"><use href="#down"/></svg></div>
  <button class="cell sq" aria-label="Stop rendering"><svg viewBox="0 0 16 16"><path d="M4 15c3 0 4-1 5-4l6-9v8c-2 3-5 5-11 5z" fill="#999"/><path d="M9 10l6-8" stroke="#555" stroke-width="1.500"/><circle cx="5.500" cy="5" r="4.300" fill="#fff" stroke="#d33" stroke-width="1.600"/><path d="M2.500 2l6 6" stroke="#d33" stroke-width="1.600"/></svg></button>
  <label class="cell render"><input type="checkbox" checked>Render</label>
  <span class="cell epsg">EPSG:4278</span>
  <button class="cell sq" aria-label="CRS status"><svg viewBox="0 0 16 16"><circle cx="8" cy="8" r="6.500" fill="#999" stroke="#222" stroke-width="2"/><path d="M8 0v16M0 8h16M3.500 3.500l9 9M12.500 3.500l-9 9" stroke="#333"/><circle cx="8" cy="8" r="2.500" fill="#eee"/></svg></button>
  <button class="cell sq" aria-label="Messages"><svg viewBox="0 0 16 16"><path d="M8 1.500l6.500 12.500h-13z" fill="#fdf7a8" stroke="#999"/><path d="M8 5.500V10M8 11v2" stroke="#222" stroke-width="1.500"/></svg></button>
</footer>
</div>
<script src="map.js"></script>
</body>
</html>
```
FILE: styles.css
```css
* { box-sizing: border-box; }
body { margin: 0; padding: 8px; background: #fff; }
body, button, input, select { font-family: "DejaVu Sans Condensed", "DejaVu Sans", "Noto Sans", sans-serif; font-size: 11px; color: #000; }
button, input, select { margin: 0; padding: 0; border: 0; background: none; }
ul { list-style: none; margin: 0; padding: 0; }
h1, h2 { margin: 0; font-weight: normal; }
.sprite { position: absolute; width: 0; height: 0; }
.app { display: flex; flex-direction: column; height: calc(100vh - 16px); min-height: 700px; background: #efefef; }

.titlebar { display: flex; align-items: center; flex: none; height: 22px; padding: 0 0 2px 2px; border-top: 1px solid #4c4c4c; background: linear-gradient(#bccad9, #d8e4f1); }
.titlebar h1 { flex: 1; margin-left: 8px; font-family: "Noto Sans", "Open Sans", sans-serif; font-size: 11px; color: #3f4347; }
.winbtns { display: flex; gap: 2px; align-self: flex-start; padding-right: 2px; }
.winbtns button { display: grid; place-items: center; width: 31px; height: 18px; border: 1px solid #8190ae; border-radius: 2px; box-shadow: inset 0 0 0 1px #dbe6f3; }
.winbtns svg { width: 12px; height: 10px; }
.i16 { flex: none; width: 16px; height: 16px; }

.menubar { display: flex; flex: none; height: 23px; padding: 2px 2px 0; border-bottom: 1px solid #b4b4b4; }
.menubar button { padding: 0 7px; }

.toolbar { display: flex; align-items: center; flex: none; height: 39px; border-top: 1px solid #fff; border-bottom: 1px solid #b4b4b4; }
.toolbar button { display: flex; align-items: center; justify-content: center; flex: none; width: 35px; height: 34px; }
.toolbar button svg { width: 24px; height: 24px; }
.toolbar button.on { border: 1px solid #8c8c8c; border-radius: 3px; background: #dadada; }
.toolbar button.drop { width: 47px; justify-content: flex-start; gap: 6px; padding-left: 5px; }
.arr, .toolbar button svg.arr { flex: none; width: 9px; height: 5px; color: #000; }
.toolbar .off svg.arr { color: #999; }
.grip, .hgrip, .ptitle i { background: radial-gradient(circle at 1px 1px, #c4c4c4 1px, transparent 1px) 0 0 / 5px 5px, radial-gradient(circle at 3px 3px, #c4c4c4 1px, transparent 1px) 0 0 / 5px 5px; }
.grip { flex: none; width: 5px; height: 29px; margin: 0 2px 0 7px; }
.grip.first { margin: 0 0 0 6px; }
.lab { color: #dcdcdc; }
.lab use { stroke: #aaa; }
.lab.gold { color: #f9dc2e; }
.lab.gold use { stroke: #b99a18; }
.lab text { font: bold 9px "DejaVu Sans Condensed", sans-serif; fill: #777; }
.lab.gold text { fill: #3b3210; }

.work { display: flex; flex: 1; min-height: 0; }
.side { display: flex; flex-direction: column; align-items: center; flex: none; width: 52px; border-right: 1px solid #b4b4b4; }
.side button { display: grid; place-items: center; flex: none; width: 40px; height: 34px; }
.side button svg { width: 24px; height: 24px; }
.side button.new { display: flex; align-items: center; width: 44px; padding-left: 4px; gap: 4px; }
.side button svg.arr { width: 10px; height: 5px; }
.side button.more { height: 38px; padding-top: 6px; }
.side button.more svg { width: 8px; height: 10px; }
.side button.xhair { height: 30px; }
.side button.end { height: 22px; padding-top: 2px; margin-left: -12px; }
.hgrip { flex: none; width: 42px; height: 5px; margin: 6px 0 0; }
.hgrip.low { margin-top: 0; }

.panel { display: flex; flex-direction: column; flex: none; min-height: 0; }
.layers { width: 294px; }
.proc { width: 256px; }
.ptitle { display: flex; align-items: center; flex: none; height: 20px; gap: 3px; padding: 0 1px 2px; }
.ptitle i { flex: 1; height: 5px; margin: 0 10px 0 2px; }
.ptitle h2 + i { margin: 0 2px 0 10px; }
.ptitle h2 { font-size: 10px; }
.ptitle button, .ptitle svg { display: block; width: 13px; height: 13px; }
.tree { flex: 1; min-height: 0; margin-left: 1px; border: 1px solid #b4b4b4; border-radius: 2px; background: #fff; padding-top: 2px; }
.tree li { display: flex; align-items: center; height: 16px; white-space: nowrap; }
.tree label { display: flex; align-items: center; }
.tree .branch { background: repeating-linear-gradient(#aaa 0 1px, transparent 1px 2px) 8px 0 / 1px 100% no-repeat, repeating-linear-gradient(90deg, #aaa 0 1px, transparent 1px 2px) 9px 8px / 12px 1px no-repeat; }
.exp { display: grid; place-items: center; flex: none; width: 9px; height: 9px; margin: 0 10px 0 4px; border: 1px solid #888; background: #fff; font-size: 9px; line-height: 7px; color: #222; }
.exp.none { border: 0; background: none; }
input[type="checkbox"] { appearance: none; flex: none; display: grid; place-items: center; width: 13px; height: 13px; border: 1px solid #bbb; background: #fff; }
input[type="checkbox"]:checked::before { content: "✖"; font-size: 13px; line-height: 11px; }
.tree label .i16 { margin: 0 6px 0 5px; }
.tree b.near { margin-left: 6px; }
.u { text-decoration: underline; }
.sel { background: #efefef; }
.grey { color: #e4e4e4; }
.blue { color: #a9cdf0; }
.leg { gap: 5px; padding-left: 42px; background: repeating-linear-gradient(#aaa 0 1px, transparent 1px 2px) 29px 0 / 1px 100% no-repeat, repeating-linear-gradient(90deg, #aaa 0 1px, transparent 1px 2px) 30px 8px / 10px 1px no-repeat; }
.leg:last-child { background-size: 1px 8px, 10px 1px; }
.leg i { width: 16px; height: 16px; border: 1px solid rgba(0, 0, 0, .6); }
.c1 { background: #0055ff; } .c2 { background: #00aa7f; } .c3 { background: #ff0000; } .c4 { background: #ffff00; }
.c5 { background: #55ff00; } .c6 { background: #00007f; } .c7 { background: #ffaa00; }
.tabs { display: flex; align-items: flex-start; flex: none; height: 22px; padding-left: 1px; }
.tabs button { height: 20px; width: 63px; padding-top: 2px; border: 1px solid #b4b4b4; border-top: 0; border-radius: 0 0 3px 3px; background: linear-gradient(#f8f8f8, #ddd); }
.tabs button.cur { height: 22px; width: 54px; background: #efefef; }
.split { flex: none; width: 6px; background: radial-gradient(circle at 2px 2px, #c8c8c8 1px, transparent 1px) repeat-y center / 4px 5px; background-size: 4px 5px; margin: 192px 0; }
.canvas { flex: 1; min-width: 0; border: 1px solid #b4b4b4; background: #fff; overflow: hidden; }
.canvas svg { display: block; width: 100%; height: 100%; }
.search { flex: none; height: 25px; margin: 0 0 3px; padding: 0 3px; border: 1px solid #b4b4b4; border-radius: 2px; background: #fff; }
.search::placeholder { color: #7a7a7a; opacity: 1; }
.proc .tree { margin-left: 0; }
.proc .tree li { margin-left: 2px; }
.proc .exp { margin-right: 9px; }
.proc .tree .i16 { margin-right: 5px; }
.proc .tree .narrow { margin-right: 2px; }
.combo { display: flex; align-items: center; flex: none; height: 20px; margin-top: 3px; padding-right: 3px; border: 1px solid #a8a8a8; border-radius: 2px; background: linear-gradient(#fafafa, #e4e4e4); }
.combo select { flex: 1; appearance: none; height: 18px; padding-left: 3px; border-right: 1px solid #b4b4b4; margin-right: 3px; }

.status { display: flex; align-items: center; flex: none; gap: 3px; height: 26px; padding-left: 5px; }
.msg { flex: 1; }
.cell { display: flex; align-items: center; justify-content: center; flex: none; height: 22px; padding: 0 3px; border: 1px solid #999; white-space: nowrap; }
.cell.link { padding: 0 1px; }
.cell a { color: #0000ff; }
.sq { width: 23px; padding: 0; border-radius: 3px; background: #f5f5f5; box-shadow: inset 0 0 0 1px #bbb; }
.sq svg { width: 17px; height: 17px; }
.coord { width: 302px; height: 20px; border: 1px solid #999; border-radius: 2px; background: #fff; text-align: center; }
.combo.sc { width: 93px; height: 22px; margin: 0; padding-right: 5px; }
.combo.sc input { flex: 1; min-width: 0; height: 18px; margin: 0 5px 0 2px; border-right: 1px solid #b4b4b4; background: #fff; }
.render { gap: 5px; width: 63px; }
.epsg { width: 63px; }
```
FILE: map.js
```javascript
const NS = "http://www.w3.org/2000/svg";
const map = document.getElementById("map");
const B = "#0055ff", R = "#ff0000", Y = "#ffff00", N = "#00007f", P = "#55ff00", O = "#ffaa00";

function hash(x, y) {
  const s = Math.sin(x * 12.9898 + y * 78.233) * 43758.5453;
  return s - Math.floor(s);
}
function parse(text) {
  return text.trim().split(/\s+/).map(p => p.split(",").map(Number));
}
// Splits an edge into a ragged line; both neighbours of a shared edge get the same line.
function ragged(a, b, out) {
  const len = Math.hypot(b[0] - a[0], b[1] - a[1]);
  if (len < 6) { out.push(b); return; }
  const fwd = a[0] < b[0] || (a[0] === b[0] && a[1] < b[1]);
  const p = fwd ? a : b, q = fwd ? b : a;
  const k = (hash(Math.round(p[0] + q[0]), Math.round(p[1] + q[1])) - .5) * .62;
  const m = [(p[0] + q[0]) / 2 - (q[1] - p[1]) * k, (p[1] + q[1]) / 2 + (q[0] - p[0]) * k];
  ragged(a, m, out);
  ragged(m, b, out);
}
function toPath(pts) {
  const out = [pts[0]];
  pts.forEach((p, i) => ragged(p, pts[(i + 1) % pts.length], out));
  return "M" + out.map(p => p[0].toFixed(1) + " " + p[1].toFixed(1)).join("L") + "Z";
}
function add(parent, tag, attrs) {
  const e = document.createElementNS(NS, tag);
  for (const k in attrs) e.setAttribute(k, attrs[k]);
  parent.appendChild(e);
  return e;
}
function group(x, y) {
  return add(map, "g", { transform: `translate(${x} ${y}) scale(.33333)`, stroke: "#111", "stroke-width": 2.6, "stroke-linejoin": "round" });
}
function seeds(x0, y0, x1, y1, step) {
  const out = [];
  for (let x = x0; x < x1; x += step)
    for (let y = y0; y < y1; y += step)
      out.push([x + (hash(x, y) - .5) * step * 1.4, y + (hash(y + 3, x) - .5) * step * 1.4]);
  return out;
}
function cell(p, all) {
  let poly = [[p[0] - 60, p[1] - 60], [p[0] + 60, p[1] - 60], [p[0] + 60, p[1] + 60], [p[0] - 60, p[1] + 60]];
  for (const q of all) {
    const dx = q[0] - p[0], dy = q[1] - p[1];
    if (q === p || Math.abs(dx) > 110 || Math.abs(dy) > 110) continue;
    const c = (q[0] * q[0] + q[1] * q[1] - p[0] * p[0] - p[1] * p[1]) / 2;
    const side = v => v[0] * dx + v[1] * dy - c;
    const next = [];
    poly.forEach((v, i) => {
      const w = poly[(i + 1) % poly.length], s = side(v), t = side(w);
      if (s <= 0) next.push(v);
      if ((s < 0 && t > 0) || (s > 0 && t < 0)) {
        const k = s / (s - t);
        next.push([v[0] + (w[0] - v[0]) * k, v[1] + (w[1] - v[1]) * k]);
      }
    });
    poly = next;
  }
  return poly;
}
let clips = 0;
function mesh(g, outline, pts, paint, width) {
  const id = "clip" + clips++;
  add(add(g, "clipPath", { id }), "path", { d: outline });
  const m = add(g, "g", { "clip-path": `url(#${id})`, "stroke-width": width });
  pts.forEach(p => {
    const c = cell(p, pts);
    if (c.length > 2) add(m, "path", { d: toPath(c), fill: paint(p) });
  });
}
function draw(g, list) {
  list.forEach(([fill, text, step]) => {
    const poly = parse(text), d = toPath(poly);
    add(g, "path", { d, fill });
    if (step) {
      const xs = poly.map(p => p[0]), ys = poly.map(p => p[1]);
      mesh(g, d, seeds(Math.min(...xs) - step, Math.min(...ys) - step, Math.max(...xs) + step, Math.max(...ys) + step, step), () => "none", 2.2);
      add(g, "path", { d, fill: "none" });
    }
  });
}

// England and Wales
const south = group(600, 400);
const land = parse(`300,105 320,95 340,88 370,75 370,35 400,30 480,32 515,25 545,40 555,70 582,95 575,130 590,150 607,182 590,180 560,160
 580,185 605,195 625,225 632,255 615,285 635,305 650,285 680,278 720,282 760,300 775,350 770,400 765,405 755,430 740,445 700,450 690,465 712,490 680,515
 710,545 750,538 745,575 720,590 705,615 650,610 635,645 600,625 560,640 500,645 470,620 455,630 430,635 410,645 408,670 380,660 365,655 352,672
 310,650 275,655 260,670 250,695 235,720 225,732 205,720 180,705 150,710 115,710 105,730 75,740 72,765 60,765 35,745 15,752 12,738 35,725 60,728 75,705
 90,690 135,650 140,618 145,600 172,600 178,572 225,568 280,570 300,560 290,545 330,520 320,516 300,525 285,538 245,535 225,525 200,510 170,512 165,480
 140,480 120,495 80,502 75,480 95,472 65,458 95,448 125,435 135,425 180,405 195,380 205,355 220,345 215,335 245,310 260,295 255,290 280,278 245,278 225,285
 215,270 205,250 210,232 235,222 255,235 270,225 285,225 280,210 300,215 295,185 305,170 298,150 300,120`);
const reds = [[355, 195, 50, 28], [435, 155, 24, 16], [310, 205, 24, 30], [378, 275, 13, 12], [405, 360, 20, 20], [448, 377, 8, 6], [487, 287, 9, 7], [453, 295, 6, 6], [560, 155, 8, 7], [538, 192, 13, 9], [588, 187, 4, 4], [355, 335, 5, 8], [595, 520, 36, 20], [560, 462, 5, 5], [480, 486, 4, 4], [463, 620, 6, 6], [178, 700, 6, 5], [342, 532, 5, 5], [487, 338, 7, 5]];
const dabs = [[380, 155, 9, 5], [435, 140, 7, 5], [390, 217, 8, 4], [727, 335, 3, 3], [613, 407, 3, 3], [692, 457, 4, 4], [393, 462, 4, 4], [575, 540, 9, 6], [300, 175, 4, 7], [470, 618, 4, 7]];
const within = (p, z, k) => z.some(c => ((p[0] - c[0]) / c[2]) ** 2 + ((p[1] - c[1]) / c[3]) ** 2 < k);
const points = [];
const far = (p, d) => !points.some(q => Math.hypot(p[0] - q[0], p[1] - q[1]) < d);
[[595, 520, 24, 16, 5], [595, 520, 56, 40, 11]].concat(reds.map(r => [r[0], r[1], r[2] + 8, r[3] + 8, 9]), dabs.map(r => [r[0], r[1], r[2] + 8, r[3] + 8, 8])).forEach(z => {
  seeds(z[0] - z[2], z[1] - z[3], z[0] + z[2] + 1, z[1] + z[3] + 1, z[4]).forEach(p => {
    if (far(p, z[4] * .6)) points.push(p);
  });
});
seeds(0, 0, 800, 130, 46).concat(seeds(0, 140, 800, 790, 29)).forEach(p => {
  if (far(p, 12)) points.push(p);
});
const coast = toPath(land);
add(south, "path", { d: coast, fill: B });
mesh(south, coast, points, p => within(p, dabs, 1) ? Y : within(p, reds, 1) && hash(p[0], p[1]) > .1 ? R : B, 2.1);
add(south, "path", { d: coast, fill: "none" });
draw(south, [
  [R, "425,195 460,175 505,175 508,205 520,220 500,235 488,250 475,275 460,265 448,235 430,210", 20],
  [Y, "432,212 445,208 448,225 438,228"],
  [R, "255,225 275,222 290,235 310,245 315,275 325,290 290,300 255,300 260,285 285,280 290,262 265,255", 24],
  [R, "140,225 155,222 148,212 170,207 185,215 197,235 180,250 170,255 160,240"],
  [P, "175,255 205,235 210,245 195,270 180,272 172,262"],
  [R, "472,348 485,345 492,360 482,378 468,362"],
  [Y, "430,295 445,300 462,295 465,310 445,328 432,325 440,312"],
  [Y, "678,280 725,285 760,308 757,322 730,312 705,300 690,292"],
  [Y, "135,425 165,405 190,385 198,355 220,352 228,380 225,410 228,430 200,425 175,432 150,435"],
  [Y, "230,380 260,370 298,385 290,410 298,450 270,478 228,470 232,440 225,405"],
  [P, "145,438 175,432 200,422 230,425 228,455 215,472 190,480 165,478 170,455"],
  [R, "165,478 200,480 245,472 280,472 298,480 300,502 325,510 318,520 290,528 270,520 235,525 220,515 200,508 172,512 168,498 162,488", 17],
  [O, "492,435 520,438 530,455 545,468 520,488 510,480 492,468"],
  [Y, "175,575 205,565 228,572 225,595 235,605 225,620 205,612 180,600"],
  [Y, "258,600 285,590 305,595 330,585 315,575 295,560 300,555 345,560 375,557 370,585 355,610 365,635 370,655 350,670 310,650 305,630 295,620 310,610 280,615 262,608", 42],
  [Y, "338,500 365,502 372,525 350,530 340,515"],
  [Y, "370,545 388,530 390,545 375,552"],
  [Y, "88,685 100,672 130,650 138,615 148,620 150,640 160,670 130,685 110,692"],
  [Y, "365,650 400,640 408,645 400,655 375,655"],
  [Y, "240,690 248,685 245,702 238,698"],
  [R, "240,645 250,648 260,638 275,645 272,658 258,668 240,655"],
  [Y, "597,610 610,608 625,620 640,640 630,645 610,635"],
  [B, "450,655 475,645 495,655 480,675 455,665"]
]);

// Borders and the north of England
draw(group(610, 290), [
  [B, "310,240 330,228 350,238 365,250 370,265 385,272 395,262 400,285 395,305 365,312 345,320 342,340 345,360 340,388 320,382 295,372 275,370 265,340 272,320 265,298 245,295 285,283 300,262"],
  [B, "310,240 330,228 350,238 365,250 370,265 385,272 395,262 400,285 395,305 365,312 345,318 325,308 318,290 320,270 300,262"],
  [R, "395,255 412,250 425,280 430,305 440,325 450,345 480,358 478,368 455,365 440,370 420,368 395,360 365,370 345,360 342,325 365,315 390,308 400,290 390,275", 19],
  [Y, "448,345 462,348 465,356 450,356"],
  [R, "245,300 262,292 272,315 265,335 275,360 265,380 270,410 268,438 258,440 240,410 218,370 225,340", 60],
  [Y, "268,370 295,370 320,382 340,388 338,405 310,412 290,425 275,435 270,410 265,385"],
  [R, "118,215 130,203 155,208 180,210 190,235 180,232 160,235 150,258 125,262 90,275 100,250 105,235"],
  [R, "90,275 125,262 150,258 160,235 180,232 190,235 205,248 222,243 228,260 225,285 228,300 205,310 185,318 160,310 145,332 125,322 105,305 97,315 100,338 92,330 85,312 73,295 75,280"],
  [R, "60,170 70,162 80,165 88,190 82,205 68,205 60,190"],
  [B, "190,205 200,185 215,170 240,155 265,165 283,185 275,195 250,205 255,225 275,230 290,262 280,285 245,295 228,292 225,260 220,242 205,250 185,242 178,225"],
  [Y, "280,155 310,145 340,133 360,140 370,155 345,190 350,215 330,230 310,240 300,262 290,260 285,235 258,225 252,205 275,195 283,185 272,165"],
  [Y, "345,190 370,155 395,180 410,200 412,230 415,250 395,255 385,272 370,265 365,250 348,238 355,215"],
  [R, "108,125 140,122 170,125 200,118 230,120 245,128 265,128 280,122 305,112 335,128 320,138 300,140 285,150 265,165 240,155 215,170 200,185 190,205 178,212 150,205 130,195 118,180 108,160 115,145", 24],
  [R, "145,130 180,128 185,155 155,155", 9],
  [Y, "240,122 252,124 256,134 242,134"]
]);

// Scotland
draw(group(560, 130), [
  [Y, "190,295 205,280 215,290 225,280 240,285 250,292 265,300 285,310 300,325 315,335 330,328 345,330 330,350 310,355 290,375 275,390 265,402 248,405 255,412 270,418 285,430 290,450 300,468 285,490 280,505 270,520 265,530 275,545 285,560 282,590 272,600 262,595 258,575 248,600 240,640 232,630 235,605 225,625 215,610 225,590 212,600 205,625 212,640 205,660 195,690 190,708 170,710 168,700 178,680 175,660 180,640 200,630 190,610 185,590 200,580 190,570 195,550 210,540 195,530 238,478 190,520 150,545 125,545 122,535 150,530 180,515 195,500 175,490 190,480 150,470 180,475 165,455 195,450 175,435 200,425 185,425 215,412 180,400 190,395 205,385 185,365 200,350 192,345 195,330 187,315"],
  [Y, "257,180 262,172 275,170 285,180 295,178 300,192 308,180 318,188 350,182 380,183 395,176 410,178 420,168 434,170 428,185 432,200 425,215 405,235 390,250 375,265 365,275 350,285 342,298 325,298 365,298 350,318 345,330 330,328 315,335 300,325 285,310 265,300 272,290 258,275 240,262 225,255 235,250 228,230 240,235 252,232 245,210 255,205 250,190"],
  [Y, "102,345 115,345 125,335 140,320 155,318 157,330 155,350 165,360 160,375 170,385 180,395 165,402 150,390 130,385 125,375 112,368 115,360"],
  [Y, "135,495 160,485 175,490 190,510 185,520 165,515 150,518 132,508"],
  [Y, "110,610 125,612 135,600 150,605 145,590 160,585 175,570 185,565 185,585 165,600 155,620 150,635 140,655 125,655 108,640 122,632 108,622"],
  [Y, "70,505 85,500 90,508 75,515"], [Y, "100,490 120,478 122,485 105,500"],
  [Y, "128,422 140,420 145,432 133,438"], [Y, "112,420 120,418 118,424"], [Y, "165,352 175,338 172,355 168,372"], [Y, "132,582 142,572 145,578 136,588"],
  [Y, "330,350 345,345 365,335 372,350 370,362 385,370 395,380 392,395 380,415 385,425 370,430 362,450 330,452 315,460 300,468 290,450 285,430 270,418 255,412 248,405 265,402 275,390 290,375 310,355"],
  [N, "370,330 400,322 415,325 430,322 450,325 455,345 460,358 440,358 435,375 437,390 412,395 405,415 400,422 385,425 380,415 392,395 395,380 385,370 370,362 372,350"],
  [N, "450,325 480,332 510,326 530,330 540,350 535,368 528,378 515,370 490,378 470,370 460,358 455,345"],
  [Y, "440,358 460,358 470,370 490,378 515,370 528,378 520,395 515,412 518,420 510,440 500,460 485,478 475,482 470,465 455,460 450,448 430,445 405,457 375,452 362,450 370,430 385,425 400,422 405,415 412,395 437,390 435,375"],
  [Y, "437,390 470,400 492,408 515,412 528,378 515,370 490,378 470,370 460,358 440,358 435,375"],
  [R, "492,418 518,412 518,422 495,426"],
  [N, "300,468 330,452 375,452 405,457 430,445 450,448 455,460 470,465 480,482 475,500 458,520 450,525 430,528 420,535 400,542 385,530 360,518 320,515 290,520 282,500 285,490"],
  [N, "405,457 430,445 450,448 455,460 470,465 480,482 475,500 458,520 435,515 415,500 400,475"],
  [R, "415,518 430,514 435,525 420,528"],
  [R, "270,530 295,520 320,516 325,545 345,570 350,595 320,590 290,600 272,600 282,590 275,560"],
  [R, "320,516 350,525 385,517 390,530 400,545 405,560 430,568 420,585 390,592 370,600 350,595 345,570 325,545"],
  [Y, "400,550 425,530 440,528 450,545 465,555 460,568 430,568 405,562"],
  [Y, "408,95 420,85 432,92 438,105 430,118 440,125 445,120 458,122 460,130 445,132 435,128 425,125 412,122 405,110"],
  [Y, "403,125 415,130 425,145 415,148 402,138"], [Y, "440,135 444,150 438,158 432,150"],
  [Y, "435,55 448,60 445,70 455,75 452,84 440,72 433,65"], [Y, "455,78 475,62 482,70 470,78 458,82"],
  [Y, "465,92 475,95 470,102 463,98"], [Y, "442,102 452,100 450,108 443,108"], [Y, "484,52 490,50 488,55"], [Y, "548,25 553,26 551,30"], [Y, "199,83 202,84 200,86"],
  [N, "160,182 165,190 160,210 155,228 148,235 140,240 145,255 135,270 122,275 112,270 100,278 88,265 80,250 90,245 78,238 82,225 95,222 105,230 112,215 125,208 140,195"],
  [N, "155,228 163,225 158,233"], [N, "88,280 105,280 103,292 90,300 80,292"],
  [N, "60,305 75,318 77,330 68,345 73,352 64,360 60,375 62,385 55,405 45,408 40,390 48,370 43,345 50,330 38,318"],
  [N, "38,415 42,425 30,436 25,430"], [N, "15,450 20,447 18,454"], [N, "26,332 30,330 29,335"]
]);
draw(group(600, 520), [[B, "126,212 129,212 128,215"], [B, "-54,405 -50,402 -51,408"], [B, "-58,402 -55,403 -57,405"]]);
```
